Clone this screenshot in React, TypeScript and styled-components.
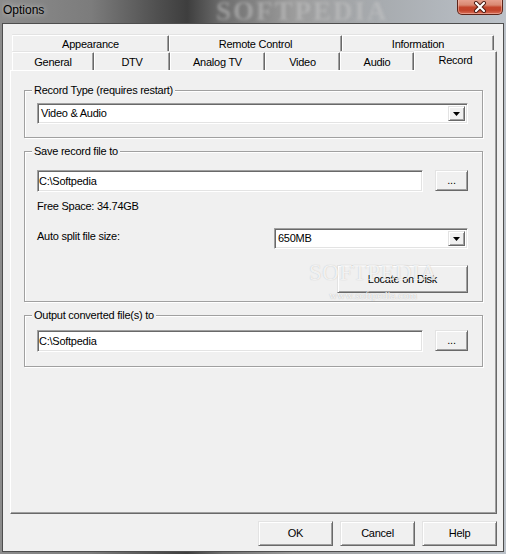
import React from 'react';
import styled, { createGlobalStyle } from 'styled-components';

const GlobalStyle = createGlobalStyle`
  html, body { margin: 0; padding: 0; }
  body {
    width: 506px;
    height: 554px;
    overflow: hidden;
    font-family: "Liberation Sans", Arial, sans-serif;
    font-size: 11px;
    letter-spacing: -0.25px;
    color: #000;
  }
  * { box-sizing: border-box; }
`;

const Frame = styled.div`
  width: 506px;
  height: 554px;
  display: flex;
  flex-direction: column;
  padding: 0 2px 2px 2px;
  background: linear-gradient(90deg, #8c8c8c 0%, #7c7c7c 18%, #505050 31%, #3e3e3e 37%, #6e6e6e 44%, #9c9c9c 58%, #a8acb0 76%, #bcc2c9 100%);
`;

const TitleBar = styled.div`
  position: relative;
  height: 23px;
  flex: none;
  display: flex;
  align-items: flex-start;
  justify-content: space-between;
  overflow: hidden;
`;

const TitleText = styled.div`
  position: relative;
  z-index: 1;
  padding: 3px 0 0 1px;
  font-size: 12px;
  letter-spacing: 0;
  line-height: 14px;
  color: #000;
  text-shadow: 0 0 6px rgba(255, 255, 255, 0.7);
`;

const TitleWatermark = styled.div`
  position: absolute;
  left: 214px;
  top: 0;
  font-family: "Liberation Serif", "Times New Roman", serif;
  font-size: 27px;
  line-height: 22px;
  font-weight: bold;
  letter-spacing: 2px;
  color: rgba(200, 200, 200, 0.5);
  filter: blur(1.4px);
  pointer-events: none;
`;

const CloseButton = styled.div`
  position: relative;
  z-index: 1;
  width: 46px;
  height: 16px;
  margin-top: -1px;
  margin-right: 1px;
  border: 1px solid #5e2418;
  border-top: none;
  border-radius: 0 0 5px 5px;
  background: linear-gradient(180deg, #e9a493 0%, #d98872 40%, #c4452c 55%, #c2432a 75%, #d9705a 100%);
  box-shadow: inset 0 0 0 1px rgba(255, 210, 200, 0.45);
  display: flex;
  align-items: center;
  justify-content: center;
`;

const Client = styled.div`
  flex: 1;
  display: flex;
  flex-direction: column;
  background: #f0f0f0;
  border: 1px solid #4e4e4e;
  padding: 11px 6px 0 7px;
`;

const TabRow = styled.div<{ $front?: boolean }>`
  position: relative;
  z-index: ${(p) => (p.$front ? 2 : 0)};
  display: flex;
  align-items: flex-end;
  height: ${(p) => (p.$front ? 17 : 18)}px;
  padding-left: 2px;
`;

const Tab = styled.div<{ $w: number; $active?: boolean; $back?: boolean }>`
  position: relative;
  width: ${(p) => p.$w}px;
  height: ${(p) => (p.$active ? 20 : 18)}px;
  margin-bottom: ${(p) => (p.$active ? -1 : 0)}px;
  background: #f0f0f0;
  border-top: 1px solid #fff;
  border-left: 1px solid #fff;
  border-right: 1px solid #696969;
  box-shadow: inset -1px 0 0 #a0a0a0, 0 -1px 0 #e3e3e3;
  border-radius: 1px 1px 0 0;
  display: flex;
  justify-content: center;
  padding-top: ${(p) => (p.$active || p.$back ? 2 : 3)}px;
  line-height: 13px;
  white-space: nowrap;
`;

const Pane = styled.div`
  position: relative;
  z-index: 1;
  height: 444px;
  flex: none;
  background: #f0f0f0;
  border: 1px solid;
  border-color: #fff #696969 #696969 #fff;
  box-shadow: inset -1px -1px 0 #a0a0a0;
  padding: 19px 13px 0 13px;
  display: flex;
  flex-direction: column;
  gap: 13px;
`;

const Group = styled.div`
  display: flex;
  flex-direction: column;
  border: 1px solid #a0a0a0;
  box-shadow: inset 1px 1px 0 #fff, 1px 1px 0 #fff;
`;

const Legend = styled.div`
  align-self: flex-start;
  margin: -7px 0 0 7px;
  padding: 0 2px;
  background: #f0f0f0;
  line-height: 13px;
  white-space: nowrap;
`;

const GroupBody = styled.div<{ $top: number; $bottom: number }>`
  display: flex;
  flex-direction: column;
  padding: ${(p) => p.$top}px 14px ${(p) => p.$bottom}px 12px;
`;

const Sunken = styled.div<{ $h: number }>`
  height: ${(p) => p.$h}px;
  background: #fff;
  border: 1px solid;
  border-color: #a0a0a0 #fff #fff #a0a0a0;
  box-shadow: inset 1px 1px 0 #696969, inset -1px -1px 0 #e3e3e3;
  display: flex;
  align-items: center;
  padding: 1px 1px 1px 2px;
  line-height: 13px;
  white-space: nowrap;
`;

const TextField = styled(Sunken)`
  flex: 1;
  padding-left: 1px;
`;

const Combo = styled(Sunken)<{ $w?: number }>`
  width: ${(p) => (p.$w ? `${p.$w}px` : 'auto')};
  padding: 2px 2px 2px 3px;
  align-items: stretch;
`;

const ComboText = styled.div`
  flex: 1;
  display: flex;
  align-items: center;
`;

const ArrowButton = styled.div`
  width: 17px;
  flex: none;
  background: #f0f0f0;
  border: 1px solid;
  border-color: #e3e3e3 #696969 #696969 #e3e3e3;
  box-shadow: inset 1px 1px 0 #fff, inset -1px -1px 0 #a0a0a0;
  display: flex;
  align-items: center;
  justify-content: center;
`;

const Button = styled.div<{ $w: number; $h: number }>`
  width: ${(p) => p.$w}px;
  height: ${(p) => p.$h}px;
  flex: none;
  background: #f0f0f0;
  border: 1px solid;
  border-color: #e3e3e3 #696969 #696969 #e3e3e3;
  box-shadow: inset 1px 1px 0 #fff, inset -1px -1px 0 #a0a0a0;
  display: flex;
  align-items: center;
  justify-content: center;
  line-height: 13px;
  white-space: nowrap;
`;

const FieldRow = styled.div`
  display: flex;
  align-items: flex-start;
  gap: 12px;
`;

const Label = styled.div<{ $mt: number }>`
  margin-top: ${(p) => p.$mt}px;
  line-height: 13px;
  white-space: nowrap;
`;

const SplitRow = styled.div`
  display: flex;
  align-items: flex-start;
  justify-content: space-between;
  margin-top: 15px;
`;

const LocateButton = styled(Button)`
  align-self: flex-end;
  margin-top: 16px;
`;

const Watermark = styled.div`
  position: absolute;
  left: 298px;
  top: 190px;
  display: flex;
  flex-direction: column;
  align-items: center;
  pointer-events: none;
  font-family: "Liberation Serif", "Times New Roman", serif;
  letter-spacing: 0;
`;

const WatermarkLogo = styled.div`
  font-size: 23px;
  line-height: 24px;
  letter-spacing: 0.5px;
  color: rgba(255, 255, 255, 0.8);
  text-shadow: 0 0 1px rgba(120, 120, 120, 0.45);
`;

const WatermarkUrl = styled.div`
  margin-top: 5px;
  font-size: 11px;
  line-height: 11px;
  color: rgba(255, 255, 255, 0.9);
  text-shadow: 0 0 1px rgba(120, 120, 120, 0.6);
`;

const DialogButtons = styled.div`
  display: flex;
  justify-content: flex-end;
  gap: 7px;
  margin-top: 7px;
`;

const backTabs = [
  { label: 'Appearance', w: 157 },
  { label: 'Remote Control', w: 173 },
  { label: 'Information', w: 152 },
];

const frontTabs = [
  { label: 'General', w: 82 },
  { label: 'DTV', w: 76 },
  { label: 'Analog TV', w: 95 },
  { label: 'Video', w: 75 },
  { label: 'Audio', w: 74 },
  { label: 'Record', w: 83, active: true },
];

const DownArrow = () => (
  <svg width="7" height="4" viewBox="0 0 7 4">
    <polygon points="0,0 7,0 3.5,4" fill="#000" />
  </svg>
);

const CloseGlyph = () => (
  <svg width="14" height="12" viewBox="0 0 14 12">
    <path d="M3 2 L11 10 M11 2 L3 10" stroke="#4a1a12" strokeWidth="4" strokeLinecap="round" />
    <path d="M3 2 L11 10 M11 2 L3 10" stroke="#fff" strokeWidth="2.2" strokeLinecap="round" />
  </svg>
);

export default function App() {
  return (
    <>
      <GlobalStyle />
      <Frame>
        <TitleBar>
          <TitleWatermark>SOFTPEDIA</TitleWatermark>
          <TitleText>Options</TitleText>
          <CloseButton>
            <CloseGlyph />
          </CloseButton>
        </TitleBar>
        <Client>
          <TabRow>
            {backTabs.map((t) => (
              <Tab key={t.label} $w={t.w} $back>
                {t.label}
              </Tab>
            ))}
          </TabRow>
          <TabRow $front>
            {frontTabs.map((t) => (
              <Tab key={t.label} $w={t.w} $active={t.active}>
                {t.label}
              </Tab>
            ))}
          </TabRow>
          <Pane>
            <Group>
              <Legend>Record Type (requires restart)</Legend>
              <GroupBody $top={6} $bottom={13}>
                <Combo $h={21}>
                  <ComboText>Video &amp; Audio</ComboText>
                  <ArrowButton>
                    <DownArrow />
                  </ArrowButton>
                </Combo>
              </GroupBody>
            </Group>
            <Group>
              <Legend>Save record file to</Legend>
              <GroupBody $top={12} $bottom={8}>
                <FieldRow>
                  <TextField $h={22}>C:\Softpedia</TextField>
                  <Button $w={33} $h={21}>...</Button>
                </FieldRow>
                <Label $mt={8}>Free Space: 34.74GB</Label>
                <SplitRow>
                  <Label $mt={2}>Auto split file size:</Label>
                  <Combo $h={21} $w={194}>
                    <ComboText>650MB</ComboText>
                    <ArrowButton>
                      <DownArrow />
                    </ArrowButton>
                  </Combo>
                </SplitRow>
                <LocateButton $w={131} $h={28}>Locate on Disk</LocateButton>
              </GroupBody>
            </Group>
            <Group>
              <Legend>Output converted file(s) to</Legend>
              <GroupBody $top={8} $bottom={14}>
                <FieldRow>
                  <TextField $h={22}>C:\Softpedia</TextField>
                  <Button $w={33} $h={21}>...</Button>
                </FieldRow>
              </GroupBody>
            </Group>
            <Watermark>
              <WatermarkLogo>SOFTPEDIA</WatermarkLogo>
              <WatermarkUrl>www.softpedia.com</WatermarkUrl>
            </Watermark>
          </Pane>
          <DialogButtons>
            <Button $w={75} $h={25}>OK</Button>
            <Button $w={75} $h={25}>Cancel</Button>
            <Button $w={75} $h={25}>Help</Button>
          </DialogButtons>
        </Client>
      </Frame>
    </>
  );
}
